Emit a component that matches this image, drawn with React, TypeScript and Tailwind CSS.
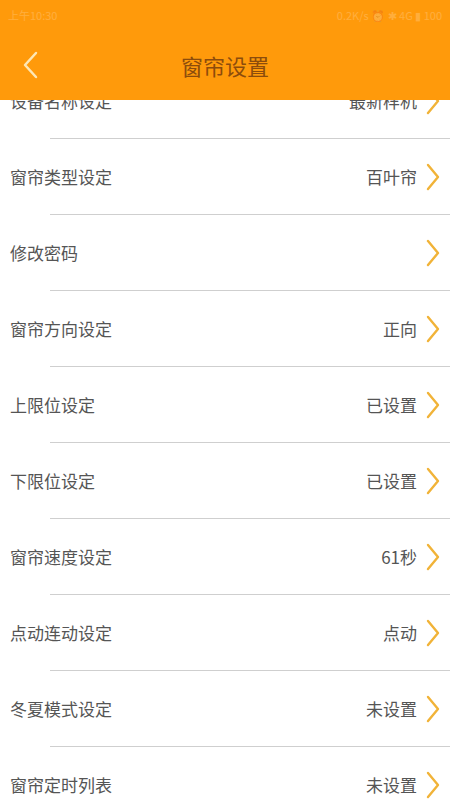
import React from 'react';

const ROWS = [
  { label: '设备名称设定', value: '最新样机' },
  { label: '窗帘类型设定', value: '百叶帘' },
  { label: '修改密码', value: '' },
  { label: '窗帘方向设定', value: '正向' },
  { label: '上限位设定', value: '已设置' },
  { label: '下限位设定', value: '已设置' },
  { label: '窗帘速度设定', value: '61秒' },
  { label: '点动连动设定', value: '点动' },
  { label: '冬夏模式设定', value: '未设置' },
  { label: '窗帘定时列表', value: '未设置' },
];

function Chevron() {
  return (
    <svg width="16" height="28" viewBox="0 0 16 28" className="shrink-0">
      <polyline points="3,2 13,14 3,26" fill="none" stroke="#f1b338" strokeWidth="2.4" strokeLinecap="round" strokeLinejoin="round" />
    </svg>
  );
}

export default function App() {
  return (
    <div
      className="w-[450px] h-[800px] overflow-hidden bg-white flex flex-col"
      style={{ fontFamily: '"Noto Sans CJK SC", "Noto Sans", sans-serif' }}
    >
      {/* Header with status bar */}
      <div className="h-[100px] shrink-0 bg-[#ff9a0b] flex flex-col relative z-10">
        <div className="h-[30px] flex items-center justify-between px-2 text-[11px] text-white opacity-20">
          <span>上午10:30</span>
          <span>0.2K/s ⏰ ✱ 4G ▮ 100</span>
        </div>
        <div className="flex-1 flex items-center relative">
          <button className="pl-[22px] pr-3 h-full flex items-center">
            <svg width="18" height="30" viewBox="0 0 18 30">
              <polyline points="14,3 3,15 14,27" fill="none" stroke="#fde7b6" strokeWidth="2.5" strokeLinecap="round" strokeLinejoin="round" />
            </svg>
          </button>
          <h1 className="absolute left-0 right-0 text-center text-[22px] text-[#8c4c0c] pointer-events-none">窗帘设置</h1>
        </div>
      </div>

      {/* Settings list, scrolled slightly */}
      <div className="flex-1 overflow-hidden">
        <div className="-mt-[37px]">
          {ROWS.map((r, i) => (
            <div key={r.label}>
              {i > 0 && <div className="ml-[50px] h-px bg-[#cfcfcf]" />}
              <div className="h-[75px] flex items-center justify-between pl-[10px] pr-[9px]">
                <span className="text-[17px] text-[#555]">{r.label}</span>
                <div className="flex items-center gap-[8px]">
                  {r.value && <span className="text-[17px] text-[#555]">{r.value}</span>}
                  <Chevron />
                </div>
              </div>
            </div>
          ))}
        </div>
      </div>
    </div>
  );
}
